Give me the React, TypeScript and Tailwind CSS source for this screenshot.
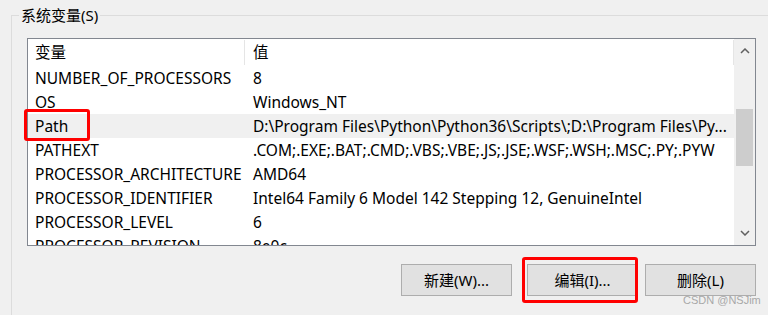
import React from 'react';

const ROWS: { name: string; value: string }[] = [
  { name: 'NUMBER_OF_PROCESSORS', value: '8' },
  { name: 'OS', value: 'Windows_NT' },
  { name: 'Path', value: 'D:\\Program Files\\Python\\Python36\\Scripts\\;D:\\Program Files\\Py...' },
  { name: 'PATHEXT', value: '.COM;.EXE;.BAT;.CMD;.VBS;.VBE;.JS;.JSE;.WSF;.WSH;.MSC;.PY;.PYW' },
  { name: 'PROCESSOR_ARCHITECTURE', value: 'AMD64' },
  { name: 'PROCESSOR_IDENTIFIER', value: 'Intel64 Family 6 Model 142 Stepping 12, GenuineIntel' },
  { name: 'PROCESSOR_LEVEL', value: '6' },
  { name: 'PROCESSOR_REVISION', value: '8e0c' },
];

function Button({ label, marked }: { label: string; marked?: boolean }) {
  return (
    <div className="relative">
      <button className="w-[111px] h-[32px] bg-[#e1e1e1] border border-[#adadad] text-[15px] text-black flex items-center justify-center">
        {label}
      </button>
      {marked && (
        <div className="absolute -left-[5px] -top-[7px] w-[116px] h-[46px] border-[3px] border-[#ff0000] rounded-[3px] pointer-events-none" />
      )}
    </div>
  );
}

export default function App() {
  return (
    <div
      className="relative w-[768px] h-[315px] bg-[#f0f0f0] overflow-hidden text-black"
      style={{ fontFamily: '"Noto Sans", "Noto Sans CJK SC", sans-serif' }}
    >
      {/* group box */}
      <div className="relative ml-[11px] mt-[15px] border-l border-t border-[#dcdcdc] h-[300px]">
        <div className="absolute left-[7px] -top-[12px] px-[2px] bg-[#f0f0f0] text-[15px] leading-[22px]">
          系统变量(S)
        </div>

        {/* list view */}
        <div className="ml-[15px] mt-[22px] w-[729px] h-[208px] bg-white border border-[#828790] flex overflow-hidden">
          <div className="flex-1 flex flex-col overflow-hidden">
            <div className="flex h-[27px] shrink-0 text-[15.5px]">
              <div className="w-[217px] pl-[7px] border-r border-[#e5e5e5] my-[1px] leading-[25px]">变量</div>
              <div className="flex-1 pl-[8px] border-r border-[#e5e5e5] my-[1px] leading-[25px]">值</div>
            </div>
            {ROWS.map((r) => (
              <div
                key={r.name}
                className={`flex h-[24px] shrink-0 text-[15.5px] leading-[24px] whitespace-nowrap ${
                  r.name === 'Path' ? 'bg-[#f0f0f0]' : ''
                }`}
              >
                <div className="w-[217px] pl-[7px] overflow-hidden">{r.name}</div>
                <div className="flex-1 pl-[8px] overflow-hidden">{r.value}</div>
              </div>
            ))}
          </div>

          {/* scrollbar */}
          <div className="w-[21px] shrink-0 bg-[#f0f0f0] flex flex-col items-center">
            <div className="h-[24px] w-full flex items-center justify-center">
              <svg width="10" height="6" viewBox="0 0 10 6">
                <polyline points="1,5 5,1 9,5" fill="none" stroke="#606060" strokeWidth="1.5" />
              </svg>
            </div>
            <div className="h-[46px]" />
            <div className="w-[17px] h-[57px] bg-[#cdcdcd]" />
            <div className="flex-1" />
            <div className="h-[24px] w-full flex items-center justify-center">
              <svg width="10" height="6" viewBox="0 0 10 6">
                <polyline points="1,1 5,5 9,1" fill="none" stroke="#606060" strokeWidth="1.5" />
              </svg>
            </div>
          </div>
        </div>

        {/* red marker around the Path row */}
        <div className="absolute left-[12px] top-[93px] w-[66px] h-[32px] border-[3px] border-[#ff0000] rounded-[3px] pointer-events-none" />

        {/* buttons */}
        <div className="flex justify-end gap-[15px] w-[744px] mt-[18px]">
          <Button label="新建(W)..." />
          <div className="mr-[-4px]">
            <Button label="编辑(I)..." marked />
          </div>
          <div className="ml-[-4px]">
            <Button label="删除(L)" />
          </div>
        </div>
      </div>

      <div
        className="absolute left-[683px] top-[293px] text-[11px] leading-[14px] text-[#a8a8a8]"
        style={{ fontFamily: '"Liberation Sans", sans-serif' }}
      >
        CSDN @NSJim
      </div>
    </div>
  );
}
